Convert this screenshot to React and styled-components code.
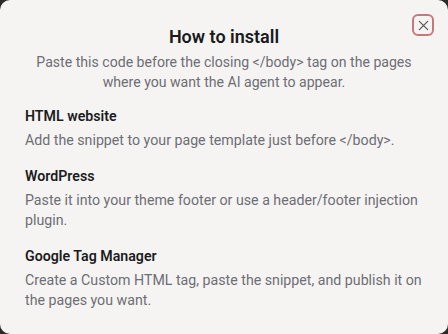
import styled, { createGlobalStyle } from "styled-components";

const Global = createGlobalStyle`
  html, body {
    margin: 0;
    padding: 0;
    background: #2a2a2a;
  }
  * {
    box-sizing: border-box;
  }
`;

const Modal = styled.div`
  position: relative;
  width: 448px;
  height: 334px;
  background: #f5f4f3;
  border-radius: 10px;
  padding: 25px 18px 0 25px;
  font-family: Roboto, "Liberation Sans", sans-serif;
  color: #1c1c1e;
`;

const Header = styled.div`
  text-align: center;
  margin: 0 7px 14px 0;
`;

const Title = styled.h2`
  margin: 0 0 3px;
  font-size: 18px;
  font-weight: 600;
  line-height: 24px;
  color: #1a1a1c;
`;

const Subtitle = styled.p`
  margin: 0;
  font-size: 14.1px;
  line-height: 20px;
  color: #6e6e74;
`;

const CloseButton = styled.button`
  position: absolute;
  top: 14px;
  right: 14px;
  width: 22px;
  height: 22px;
  padding: 0;
  border: 2px solid #c47a7a;
  border-radius: 6px;
  background: transparent;
  display: flex;
  align-items: center;
  justify-content: center;
  color: #555;
  cursor: pointer;
`;

const Section = styled.div`
  margin-bottom: 16px;
`;

const SectionTitle = styled.h3`
  margin: 0 0 4px;
  font-size: 14.2px;
  font-weight: 600;
  line-height: 20px;
  color: #1c1c1e;
`;

const SectionText = styled.p`
  margin: 0;
  font-size: 14.2px;
  line-height: 20px;
  color: #6e6e74;
`;

const sections = [
  {
    title: "HTML website",
    text: "Add the snippet to your page template just before </body>.",
  },
  {
    title: "WordPress",
    text: "Paste it into your theme footer or use a header/footer injection plugin.",
  },
  {
    title: "Google Tag Manager",
    text: "Create a Custom HTML tag, paste the snippet, and publish it on the pages you want.",
  },
];

const App = () => {
  return (
    <>
      <Global />
      <Modal>
        <CloseButton aria-label="Close">
          <svg width="11" height="11" viewBox="0 0 12 12" fill="none" stroke="currentColor" strokeWidth="1.3" strokeLinecap="round">
            <path d="M1.5 1.5l9 9M10.5 1.5l-9 9" />
          </svg>
        </CloseButton>
        <Header>
          <Title>How to install</Title>
          <Subtitle>
            Paste this code before the closing &lt;/body&gt; tag on the pages where you want the AI agent to appear.
          </Subtitle>
        </Header>
        {sections.map((s) => (
          <Section key={s.title}>
            <SectionTitle>{s.title}</SectionTitle>
            <SectionText>{s.text}</SectionText>
          </Section>
        ))}
      </Modal>
    </>
  );
};

export default App;
